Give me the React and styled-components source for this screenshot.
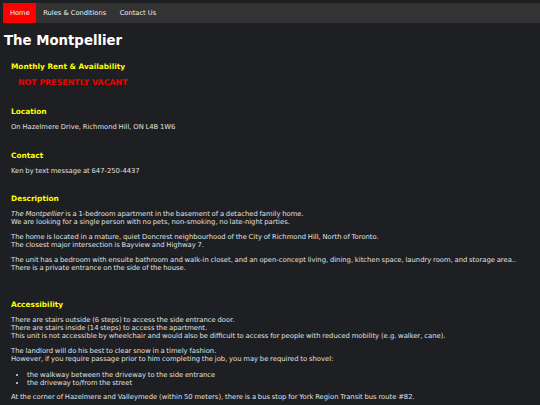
import React from 'react';
import styled, { createGlobalStyle } from 'styled-components';

const GlobalStyle = createGlobalStyle`
  html, body {
    margin: 0;
    background-color: #1e1f22;
  }
  body {
    padding: 3px 0 0 3px;
    font-family: "DejaVu Sans", Verdana, sans-serif;
    color: #e0e0e0;
  }
`;

const Navbar = styled.nav`
  display: flex;
  align-items: stretch;
  height: 20px;
  background-color: #333333;
`;

const NavLink = styled.a`
  display: flex;
  align-items: center;
  padding: 0 6.5px 0 7px;
  font-size: 6.7px;
  color: #f2f2f2;
  text-decoration: none;
  background-color: ${(p) => (p.$active ? '#ff0000' : 'transparent')};
`;

const Title = styled.h1`
  margin: 10px 0 0 1px;
  font-size: 13.3px;
  font-weight: bold;
  color: #ffffff;
`;

const Section = styled.section`
  padding: 0 8px;
  margin-top: ${(p) => p.$gap || 14}px;
`;

const Heading = styled.h3`
  margin: 0 0 7px;
  font-size: 7.4px;
  font-weight: bold;
  color: #ffff00;
`;

const Vacant = styled.div`
  margin: 2px 0 0 7px;
  font-size: 7.9px;
  font-weight: bold;
  color: #ee0000;
`;

const Para = styled.p`
  margin: 0 0 7px;
  font-size: 6.8px;
  line-height: 8px;
  word-spacing: -0.4px;
`;

const List = styled.ul`
  margin: 8px 0 6px;
  padding-left: 16px;
  font-size: 6.8px;
  line-height: 8px;
  word-spacing: -0.4px;
`;

export default function App() {
  return (
    <>
      <GlobalStyle />
      <Navbar>
        <NavLink $active href="#">Home</NavLink>
        <NavLink href="#">Rules &amp; Conditions</NavLink>
        <NavLink href="#">Contact Us</NavLink>
      </Navbar>
      <Title>The Montpellier</Title>
      <Section $gap={14}>
        <Heading>Monthly Rent &amp; Availability</Heading>
        <Vacant>NOT PRESENTLY VACANT</Vacant>
      </Section>
      <Section $gap={20}>
        <Heading>Location</Heading>
        <Para>On Hazelmere Drive, Richmond Hill, ON L4B 1W6</Para>
      </Section>
      <Section $gap={20}>
        <Heading>Contact</Heading>
        <Para>Ken by text message at 647-250-4437</Para>
      </Section>
      <Section $gap={19}>
        <Heading>Description</Heading>
        <Para>
          <i>The Montpellier</i> is a 1-bedroom apartment in the basement of a detached family home.
          <br />
          We are looking for a single person with no pets, non-smoking, no late-night parties.
        </Para>
        <Para>
          The home is located in a mature, quiet Doncrest neighbourhood of the City of Richmond Hill, North of Toronto.
          <br />
          The closest major intersection is Bayview and Highway 7.
        </Para>
        <Para>
          The unit has a bedroom with ensuite bathroom and walk-in closet, and an open-concept living, dining, kitchen space, laundry room, and storage area..
          <br />
          There is a private entrance on the side of the house.
        </Para>
      </Section>
      <Section $gap={28}>
        <Heading>Accessibility</Heading>
        <Para>
          There are stairs outside (6 steps) to access the side entrance door.
          <br />
          There are stairs inside (14 steps) to access the apartment.
          <br />
          This unit is not accessible by wheelchair and would also be difficult to access for people with reduced mobility (e.g. walker, cane).
        </Para>
        <Para>
          The landlord will do his best to clear snow in a timely fashion.
          <br />
          However, if you require passage prior to him completing the job, you may be required to shovel:
        </Para>
        <List>
          <li>the walkway between the driveway to the side entrance</li>
          <li>the driveway to/from the street</li>
        </List>
        <Para>
          At the corner of Hazelmere and Valleymede (within 50 meters), there is a bus stop for York Region Transit bus route #82.
        </Para>
      </Section>
    </>
  );
}
